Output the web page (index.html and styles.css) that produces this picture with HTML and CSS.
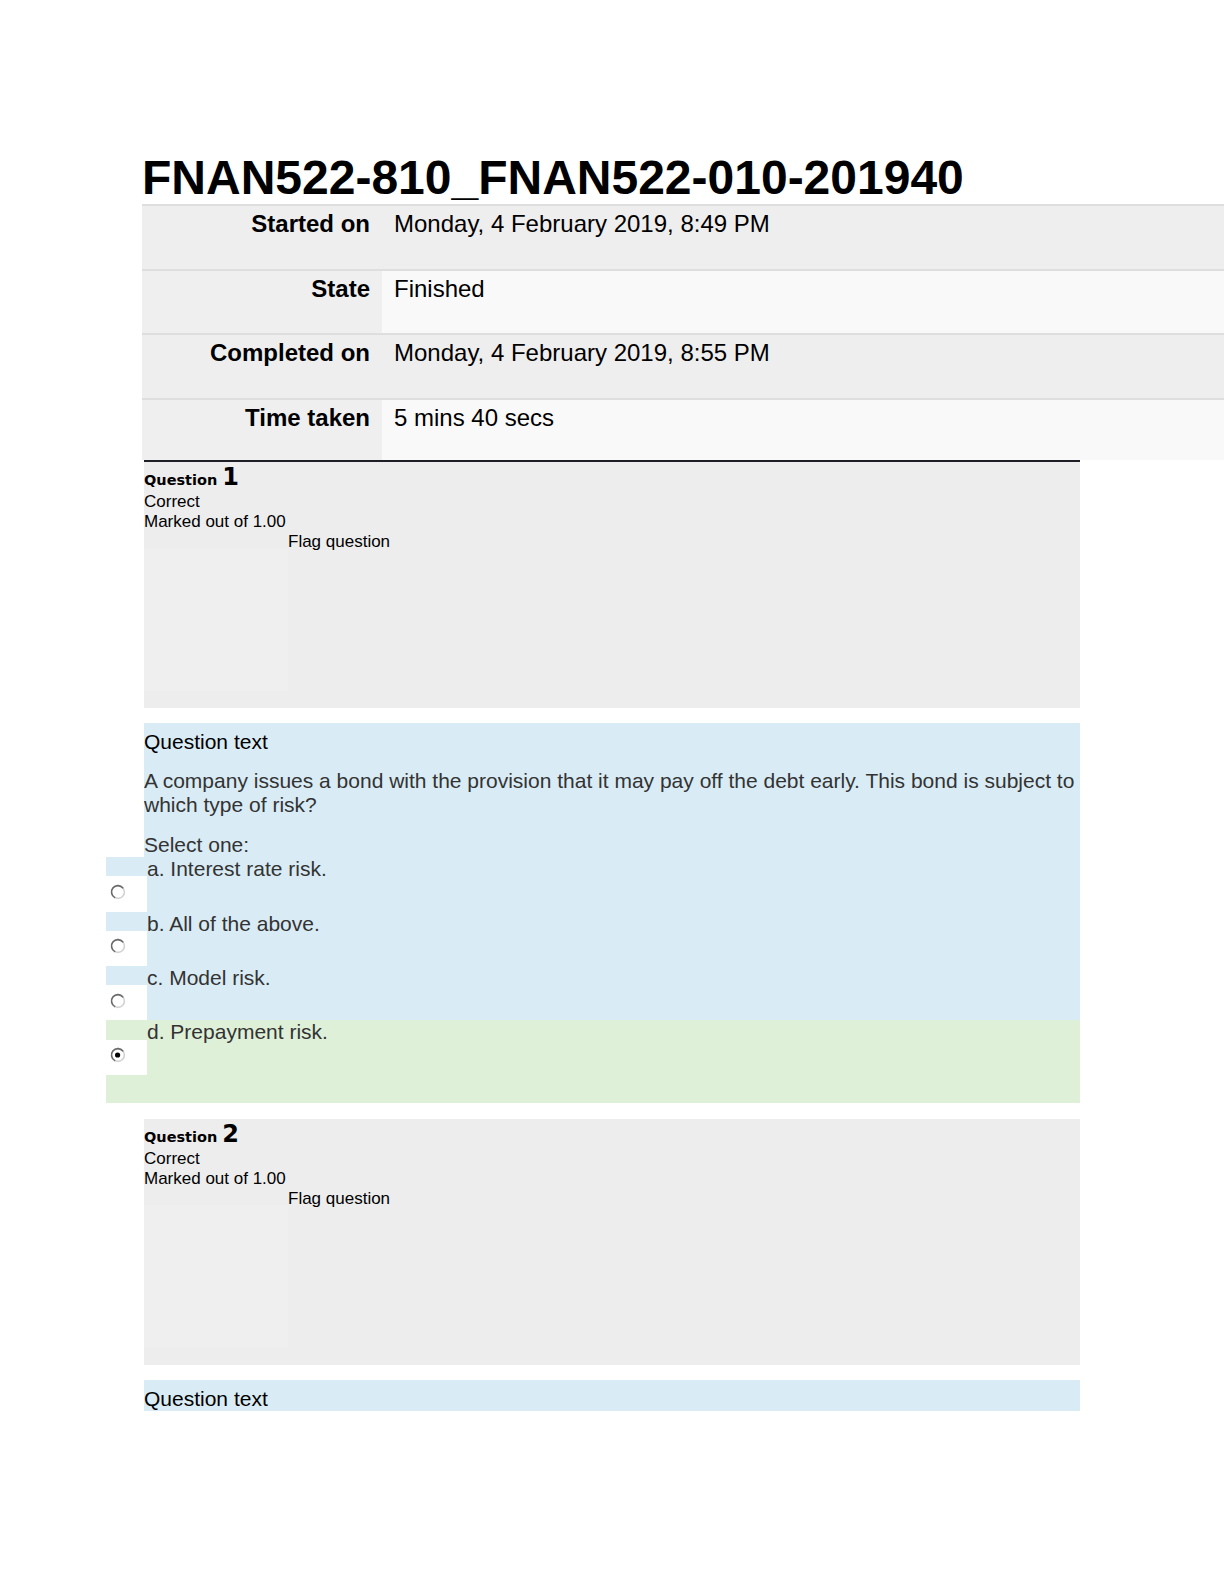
FILE: index.html
```html
<!DOCTYPE html>
<html>
<head>
<meta charset="utf-8">
<title>FNAN522-810_FNAN522-010-201940</title>
<link rel="stylesheet" href="styles.css">
</head>
<body>
<div class="page">
  <h1 class="title">FNAN522-810_FNAN522-010-201940</h1>
  <div class="summary">
    <div class="lbl odd">Started on</div><div class="val odd">Monday, 4 February 2019, 8:49 PM</div>
    <div class="lbl even">State</div><div class="val even">Finished</div>
    <div class="lbl odd">Completed on</div><div class="val odd">Monday, 4 February 2019, 8:55 PM</div>
    <div class="lbl even last">Time taken</div><div class="val even last">5 mins 40 secs</div>
  </div>

  <div class="que first">
    <div class="info">
      <h3 class="qno">Question <span class="num">1</span></h3>
      <div class="state">Correct</div>
      <div class="grade">Marked out of 1.00</div>
      <div class="flag"><div class="flag-img"></div><div class="flag-text">Flag question</div></div>
    </div>
    <div class="content">
      <div class="formulation">
        <h4 class="qtext-label">Question text</h4>
        <div class="qtext">A company issues a bond with the provision that it may pay off the debt early. This bond is subject to which type of risk?</div>
        <div class="prompt">Select one:</div>
        <div class="answer">
          <div class="opt">
            <div class="opt-label">a. Interest rate risk.</div>
            <div class="radio"><svg width="16" height="16" viewBox="0 0 16 16"><circle cx="8" cy="8" r="6.4" fill="#fff" stroke="#d2d2d2" stroke-width="1.6"/><path d="M13.2 4.4 A6.4 6.4 0 1 0 5.2 13.8" fill="none" stroke="#6a6a6a" stroke-width="1.6"/></svg></div>
          </div>
          <div class="opt">
            <div class="opt-label">b. All of the above.</div>
            <div class="radio"><svg width="16" height="16" viewBox="0 0 16 16"><circle cx="8" cy="8" r="6.4" fill="#fff" stroke="#d2d2d2" stroke-width="1.6"/><path d="M13.2 4.4 A6.4 6.4 0 1 0 5.2 13.8" fill="none" stroke="#6a6a6a" stroke-width="1.6"/></svg></div>
          </div>
          <div class="opt">
            <div class="opt-label">c. Model risk.</div>
            <div class="radio"><svg width="16" height="16" viewBox="0 0 16 16"><circle cx="8" cy="8" r="6.4" fill="#fff" stroke="#d2d2d2" stroke-width="1.6"/><path d="M13.2 4.4 A6.4 6.4 0 1 0 5.2 13.8" fill="none" stroke="#6a6a6a" stroke-width="1.6"/></svg></div>
          </div>
          <div class="opt correct">
            <div class="opt-label">d. Prepayment risk.</div>
            <div class="radio"><svg width="16" height="16" viewBox="0 0 16 16"><circle cx="8" cy="8" r="6.4" fill="#fff" stroke="#d2d2d2" stroke-width="1.6"/><path d="M13.2 4.4 A6.4 6.4 0 1 0 5.2 13.8" fill="none" stroke="#6a6a6a" stroke-width="1.6"/><circle cx="7.6" cy="8" r="2.6" fill="#000"/></svg></div>
          </div>
        </div>
      </div>
    </div>
  </div>

  <div class="que second">
    <div class="info">
      <h3 class="qno">Question <span class="num">2</span></h3>
      <div class="state">Correct</div>
      <div class="grade">Marked out of 1.00</div>
      <div class="flag"><div class="flag-img"></div><div class="flag-text">Flag question</div></div>
    </div>
    <div class="content">
      <div class="formulation cut">
        <h4 class="qtext-label">Question text</h4>
      </div>
    </div>
  </div>
</div>
</body>
</html>
```

FILE: styles.css
```css
html, body {
  margin: 0;
  background: #fff;
}
body {
  font-family: "Liberation Sans", Arial, sans-serif;
  color: #000;
  overflow-x: hidden;
}
.page {
  padding-left: 142px;
  padding-top: 152px;
  padding-bottom: 170px;
}
.title {
  margin: 0;
  font-size: 48px;
  line-height: 52px;
  font-weight: bold;
  white-space: nowrap;
  color: #000;
}
.summary {
  display: grid;
  grid-template-columns: 240px 1fr;
}
.lbl, .val {
  box-sizing: border-box;
  height: 64.5px;
  border-top: 2px solid #dedede;
  padding-top: 4px;
  font-size: 24px;
  line-height: 28px;
  color: #000;
  white-space: nowrap;
}
.lbl.last, .val.last {
  height: 62.5px;
}
.lbl {
  text-align: right;
  padding-right: 12px;
  font-weight: bold;
}
.val {
  padding-left: 12px;
}
.lbl.odd, .val.odd { background: #eeeeee; }
.lbl.even { background: #efefef; }
.val.even { background: #f9f9f9; }

.que {
  width: 936px;
  margin-left: 2px;
}
.que.first {
  border-top: 2px solid #1e1e26;
}
.que.second {
  margin-top: 16.3px;
}
.info {
  background: #ededed;
  padding-bottom: 16.7px;
}
.qno {
  margin: 0;
  height: 30px;
  line-height: 30px;
  font-family: "DejaVu Sans", sans-serif;
  font-weight: bold;
  font-size: 14.5px;
  color: #000;
}
.qno .num {
  font-size: 24px;
}
.state, .grade, .flag {
  font-size: 17px;
  line-height: 20px;
  color: #000;
}
.flag {
  display: flex;
  align-items: flex-start;
}
.flag-img {
  flex: none;
  width: 144px;
  height: 143.3px;
  margin-top: 15.6px;
  background: #efefef;
}
.content {
  margin-top: 15.3px;
}
.formulation {
  background: #d9ecf5;
  padding-top: 7px;
}
.formulation.cut {
  box-sizing: border-box;
  height: 30.7px;
  overflow: hidden;
}
.qtext-label {
  margin: 0;
  font-weight: normal;
  font-size: 21px;
  line-height: 24px;
  color: #000;
}
.qtext {
  margin-top: 14.75px;
  margin-right: -6px;
  font-size: 21px;
  line-height: 24px;
  color: #333;
}
.prompt {
  margin-top: 16.5px;
  font-size: 21px;
  line-height: 24px;
  color: #333;
}
.answer {
  margin-left: -38px;
}
.opt {
  background: #d9ecf5;
}
.opt.correct {
  background: #dff0d8;
  padding-bottom: 28px;
}
.opt-label {
  padding-left: 41px;
  font-size: 21px;
  line-height: 24px;
  margin-bottom: -4.8px;
  color: #333;
}
.radio {
  box-sizing: border-box;
  width: 41px;
  height: 35.2px;
  padding: 7.5px 0 0 3.5px;
  background: #fff;
}
.radio svg {
  display: block;
}
```
